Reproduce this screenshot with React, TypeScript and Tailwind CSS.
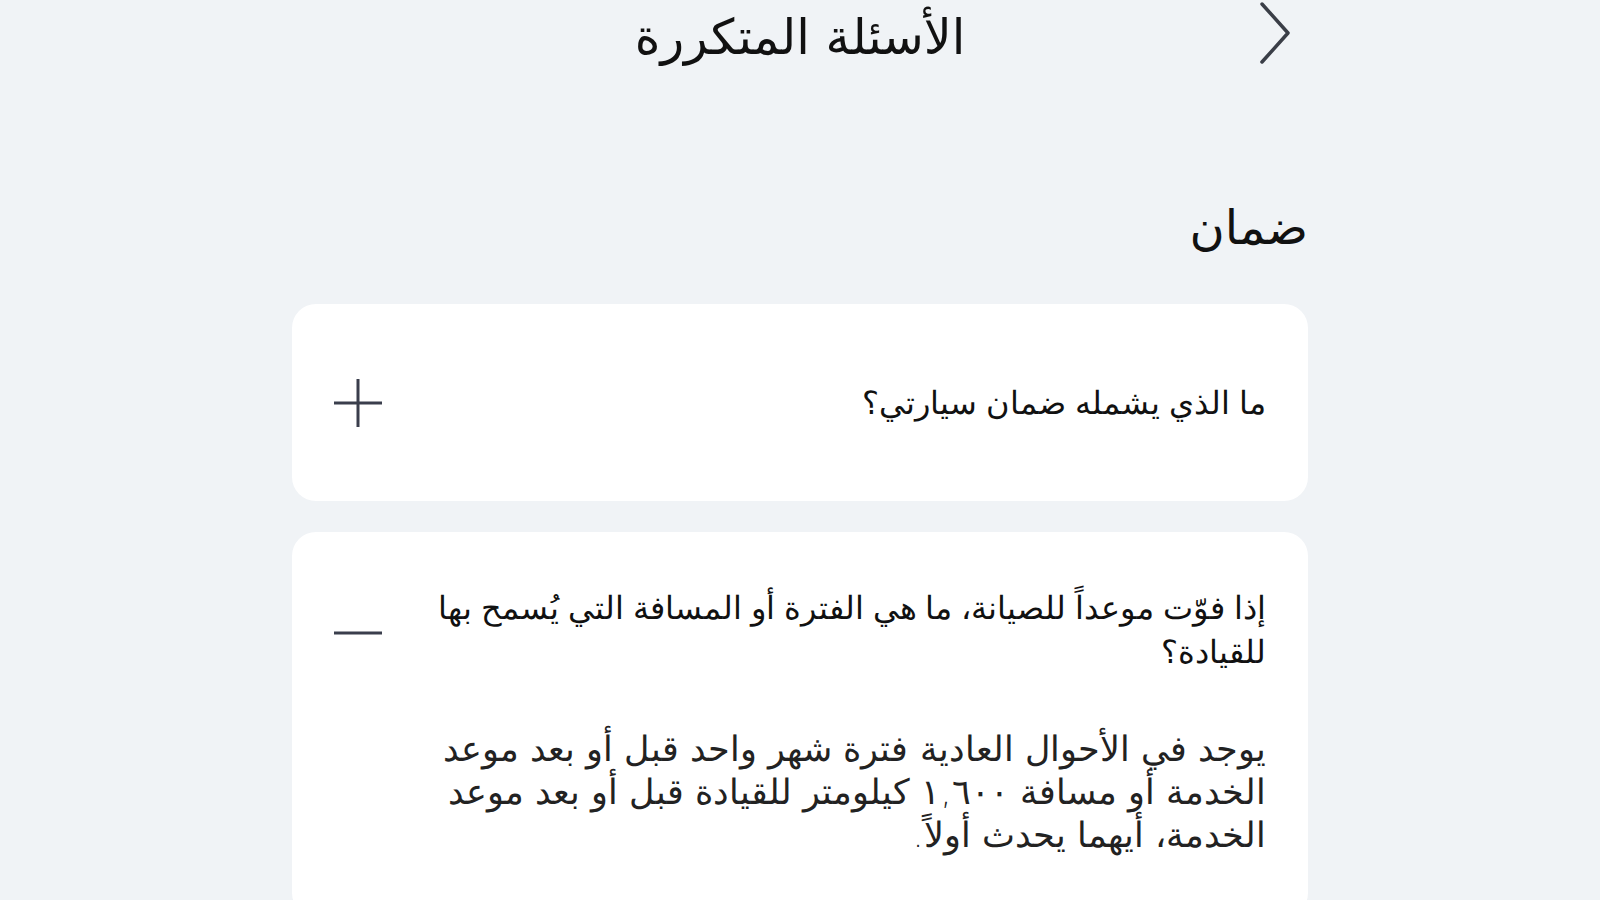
import { useState } from "react";

const FAQS = [
  {
    q: "ما الذي يشمله ضمان سيارتي؟",
    a: "",
  },
  {
    q: "إذا فوّت موعداً للصيانة، ما هي الفترة أو المسافة التي يُسمح بها للقيادة؟",
    a: "يوجد في الأحوال العادية فترة شهر واحد قبل أو بعد موعد الخدمة أو مسافة ١,٦٠٠ كيلومتر للقيادة قبل أو بعد موعد الخدمة، أيهما يحدث أولاً.",
  },
];

export default function App() {
  const [open, setOpen] = useState<number | null>(1);

  return (
    <div
      dir="rtl"
      className="min-h-screen bg-[#f0f3f6] text-[#111]"
      style={{ fontFamily: '"DejaVu Sans", sans-serif' }}
    >
      <div className="mx-auto w-[1016px]">
        <header className="grid h-[78px] grid-cols-[1fr_auto_1fr] items-center">
          <div className="flex justify-start pr-[14px]">
            <svg width="36" height="66" viewBox="0 0 36 66" fill="none" className="-mt-[12px]">
              <path
                d="M4 4 L30 33 L4 62"
                stroke="#3a3e47"
                strokeWidth="3.5"
                strokeLinecap="round"
                strokeLinejoin="round"
              />
            </svg>
          </div>
          <h1 className="text-[49px] leading-none font-normal -mt-[4px]">الأسئلة المتكررة</h1>
          <div />
        </header>

        <h2 className="mt-[125px] text-[48px] leading-none font-normal">ضمان</h2>

        <div className="mt-[53px] flex flex-col gap-[31px]">
          {FAQS.map((f, i) => {
            const isOpen = open === i;
            return (
              <div key={i} className="rounded-[24px] bg-white">
                <button
                  type="button"
                  onClick={() => setOpen(isOpen ? null : i)}
                  className={
                    "flex w-full items-center gap-[40px] pl-[42px] pr-[42px] text-right " +
                    (isOpen ? "pt-[54px] items-start" : "h-[197px]")
                  }
                  style={{ fontFamily: '"Liberation Sans", Arial, sans-serif' }}
                >
                  <span className="flex-1 text-[32px] leading-[44px] text-[#111]">{f.q}</span>
                  <span className={"flex h-[48px] w-[48px] shrink-0 items-center justify-center " + (isOpen ? "mt-[23px]" : "")}>
                    <svg width="48" height="48" viewBox="0 0 48 48">
                      <path d="M0 24 H48" stroke="#3a3e4c" strokeWidth="3" strokeLinecap="round" />
                      {!isOpen && (
                        <path d="M24 0 V48" stroke="#3a3e4c" strokeWidth="3" strokeLinecap="round" />
                      )}
                    </svg>
                  </span>
                </button>
                {isOpen && f.a && (
                  <p className="pr-[42px] pl-[128px] pt-[54px] pb-[60px] text-[35px] leading-[43px] font-light text-[#222]">
                    {f.a}
                  </p>
                )}
              </div>
            );
          })}
        </div>
      </div>
    </div>
  );
}
